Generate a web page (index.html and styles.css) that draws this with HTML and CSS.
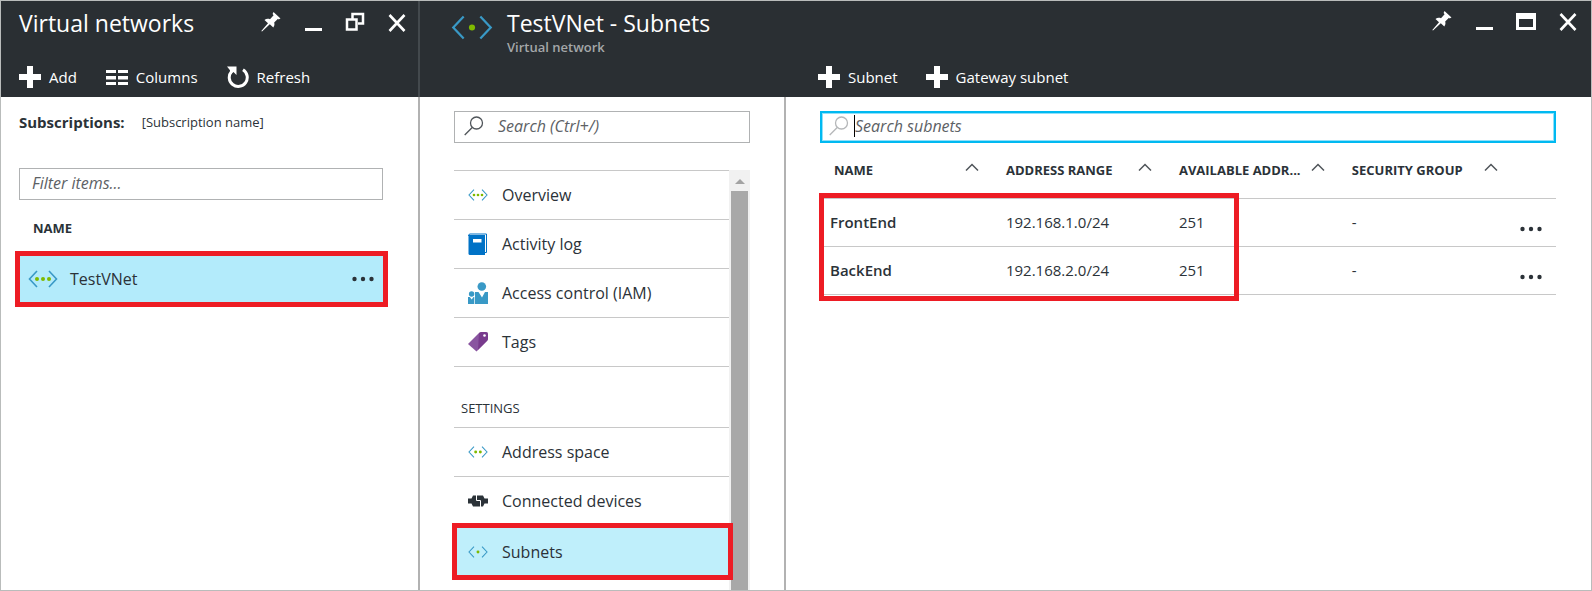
FILE: index.html
```html
<!DOCTYPE html>
<html lang="en">
<head>
<meta charset="utf-8">
<title>TestVNet - Subnets</title>
<link rel="stylesheet" href="styles.css">
</head>
<body>
<svg class="defs" aria-hidden="true">
  <symbol id="i-pin" viewBox="0 0 20 20"><path fill="currentColor" d="M12.500 0 19.500 6.500 17.500 7.500 17 6.800 13.200 10.600C13.800 12.500 13.300 14.200 12.300 15.500L8.800 12.200 1 19.500 0.300 19 7 11.200 3.500 8C5 6.700 7 6.500 9 7.200L12.600 3.200 11.600 2Z"/></symbol>
  <symbol id="i-min" viewBox="0 0 20 20"><path fill="currentColor" d="M2 16h17v3H2z"/></symbol>
  <symbol id="i-restore" viewBox="0 0 20 20"><path fill="none" stroke="currentColor" stroke-width="2.500" d="M7.500 7V2h10.500v9.500H13M2 7.500h9.500v10H2z"/></symbol>
  <symbol id="i-max" viewBox="0 0 20 20"><path fill="currentColor" fill-rule="evenodd" d="M0 2h20v17H0zM3 8v8h14V8z"/></symbol>
  <symbol id="i-close" viewBox="0 0 20 20"><path fill="none" stroke="currentColor" stroke-width="2.600" d="M2.500 3l15 16M17.500 3l-15 16"/></symbol>
  <symbol id="i-plus" viewBox="0 0 22 22"><path fill="currentColor" d="M8 0h6v8h8v6h-8v8H8v-8H0V8h8z"/></symbol>
  <symbol id="i-cols" viewBox="0 0 22 22"><path fill="currentColor" d="M0 4h10v3H0zM12 4h10v3H12zM0 10h10v3.500H0zM12 10h10v3.500H12zM0 16h10v3H0zM12 16h10v3H12z"/></symbol>
  <symbol id="i-refresh" viewBox="0 0 22 22"><path fill="none" stroke="currentColor" stroke-width="3" d="M16 3.800A9 9 0 1 1 4.500 5.500"/><path fill="currentColor" d="M0 0.500h9.500V9L6.500 6 4 8 2.800 4z"/></symbol>
  <symbol id="i-net3" viewBox="0 0 30 18"><path fill="none" stroke="#3999c6" stroke-width="1.600" d="M9 1 1.500 9 9 17M21 1l7.500 8L21 17"/><g fill="#7fba00"><circle cx="9" cy="9" r="2"/><circle cx="15" cy="9" r="2"/><circle cx="21" cy="9" r="2"/></g></symbol>
  <symbol id="i-net2" viewBox="0 0 30 18"><path fill="none" stroke="#3999c6" stroke-width="1.600" d="M9 1 1.500 9 9 17M21 1l7.500 8L21 17"/><g fill="#7fba00"><circle cx="11.500" cy="9" r="2.200"/><circle cx="18.500" cy="9" r="2.200"/></g></symbol>
  <symbol id="i-net1" viewBox="0 0 30 18"><path fill="none" stroke="#3999c6" stroke-width="1.600" d="M9 1 1.500 9 9 17M21 1l7.500 8L21 17"/><circle fill="#7fba00" cx="15" cy="9" r="2.200"/></symbol>
  <symbol id="i-search" viewBox="0 0 20 20"><g fill="none" stroke="currentColor" stroke-width="1.300"><circle cx="12.500" cy="7" r="6"/><path d="M8.200 11.500.7 19"/></g></symbol>
  <symbol id="i-book" viewBox="0 0 20 22"><path fill="#0072c6" d="M1 2h16v20H2a1.500 1.500 0 0 1-1.500-1.500V2z"/><path fill="none" stroke="#0072c6" d="M17 19.500h1.500V1H2Q.5 1 .5 3"/><path fill="#fff" d="M5 6h8.500v3.500H5z"/></symbol>
  <symbol id="i-iam" viewBox="0 0 20 22"><g fill="#3999c6"><circle cx="13.800" cy="4.500" r="4.300"/><circle cx="3.600" cy="12" r="2.700"/><path d="M7 10h3.500l3.500 5.500L17 10h3v12H7zM0 15h1.800l1.900 2.500L5.500 15H6.300v7H0z"/></g></symbol>
  <symbol id="i-tag" viewBox="0 0 20 20"><path fill="#8955a0" d="M11 1Q12 0 13.500 0H18q2 0 2 2v5q0 1-1 2L8.500 19.500 0 12z"/><path fill="#68217a" opacity=".5" d="M11 1Q12 0 13.500 0H18q2 0 2 2v5q0 1-1 2L10 18z"/><circle fill="#fff" cx="16.500" cy="3.500" r="1.300"/></symbol>
  <symbol id="i-plug" viewBox="0 0 20 12"><path fill="#2b3238" d="M0 3.500h3.500L5 .5h10l1.500 3H20v5h-3.500l-1.500 3H5l-1.500-3H0z"/><path fill="none" stroke="#fff" stroke-width="1" d="M8.500 0v5.500h4V12"/></symbol>
  <symbol id="i-chev" viewBox="0 0 14 8"><path fill="none" stroke="#50555a" stroke-width="1.500" d="M1 7.500 7 1.500l6 6"/></symbol>
  <symbol id="i-dots" viewBox="0 0 22 6"><g fill="currentColor"><circle cx="2.500" cy="3" r="2.200"/><circle cx="11" cy="3" r="2.200"/><circle cx="19.500" cy="3" r="2.200"/></g></symbol>
</svg>
<div class="portal">
  <section class="blade blade-list">
    <header class="head">
      <div class="titlebar">
        <h1 class="title">Virtual networks</h1>
        <div class="window-tools">
          <button aria-label="Pin"><svg><use href="#i-pin"/></svg></button>
          <button aria-label="Minimize"><svg><use href="#i-min"/></svg></button>
          <button aria-label="Restore"><svg><use href="#i-restore"/></svg></button>
          <button aria-label="Close"><svg><use href="#i-close"/></svg></button>
        </div>
      </div>
      <div class="commands">
        <button><svg><use href="#i-plus"/></svg>Add</button>
        <button><svg><use href="#i-cols"/></svg>Columns</button>
        <button><svg><use href="#i-refresh"/></svg>Refresh</button>
      </div>
    </header>
    <div class="list-body">
      <p class="subs"><b>Subscriptions:</b> <span>[Subscription name]</span></p>
      <input class="filter" type="text" placeholder="Filter items..." aria-label="Filter items">
      <h2 class="list-label">NAME</h2>
      <div class="vnet marked">
        <a href="#"><svg><use href="#i-net3"/></svg>TestVNet</a>
        <button class="more" aria-label="More"><svg><use href="#i-dots"/></svg></button>
      </div>
    </div>
  </section>

  <section class="detail">
    <header class="head detail-head">
      <div class="detail-title">
        <svg><use href="#i-net1"/></svg>
        <div>
          <h1 class="title">TestVNet - Subnets</h1>
          <p class="kind">Virtual network</p>
        </div>
      </div>
      <div class="detail-tools">
        <div class="window-tools">
          <button aria-label="Pin"><svg><use href="#i-pin"/></svg></button>
          <button aria-label="Minimize"><svg><use href="#i-min"/></svg></button>
          <button aria-label="Maximize"><svg><use href="#i-max"/></svg></button>
          <button aria-label="Close"><svg><use href="#i-close"/></svg></button>
        </div>
        <div class="commands">
          <button><svg><use href="#i-plus"/></svg>Subnet</button>
          <button><svg><use href="#i-plus"/></svg>Gateway subnet</button>
        </div>
      </div>
    </header>
    <div class="detail-body">
      <div class="menu-pane">
        <label class="search"><svg><use href="#i-search"/></svg><input type="text" placeholder="Search (Ctrl+/)" aria-label="Search"></label>
        <div class="menu-scroll">
          <nav class="menu">
            <a href="#"><svg><use href="#i-net3"/></svg>Overview</a>
            <a href="#"><svg><use href="#i-book"/></svg>Activity log</a>
            <a href="#"><svg><use href="#i-iam"/></svg>Access control (IAM)</a>
            <a href="#"><svg><use href="#i-tag"/></svg>Tags</a>
            <h2>SETTINGS</h2>
            <a href="#"><svg><use href="#i-net2"/></svg>Address space</a>
            <a href="#"><svg><use href="#i-plug"/></svg>Connected devices</a>
            <a href="#" class="marked current" aria-current="page"><svg><use href="#i-net1"/></svg>Subnets</a>
          </nav>
          <div class="scrollbar"><span class="arrow"></span><span class="thumb"></span></div>
        </div>
      </div>
      <div class="grid-pane">
        <label class="search focused"><svg><use href="#i-search"/></svg><span class="caret"></span><input type="text" placeholder="Search subnets" aria-label="Search subnets"></label>
        <div class="grid-wrap">
          <table class="grid">
            <thead>
              <tr>
                <th class="name"><div><span>NAME</span><svg><use href="#i-chev"/></svg></div></th>
                <th><div><span>ADDRESS RANGE</span><svg><use href="#i-chev"/></svg></div></th>
                <th><div><span>AVAILABLE ADDR...</span><svg><use href="#i-chev"/></svg></div></th>
                <th><div><span>SECURITY GROUP</span><svg><use href="#i-chev"/></svg></div></th>
                <th class="last"></th>
              </tr>
            </thead>
            <tbody>
              <tr><td class="name">FrontEnd</td><td>192.168.1.0/24</td><td>251</td><td>-</td><td class="last"><button class="more" aria-label="More"><svg><use href="#i-dots"/></svg></button></td></tr>
              <tr><td class="name">BackEnd</td><td>192.168.2.0/24</td><td>251</td><td>-</td><td class="last"><button class="more" aria-label="More"><svg><use href="#i-dots"/></svg></button></td></tr>
            </tbody>
          </table>
          <div class="highlight"></div>
        </div>
      </div>
    </div>
  </section>
</div>
</body>
</html>
```
FILE: styles.css
```css
* { box-sizing: border-box; }
body { margin: 0; font: 15px/20px "Open Sans", "Noto Sans", sans-serif; color: #2b3238; background: #fff; }
h1, h2, p { margin: 0; font-weight: 400; }
a { color: inherit; text-decoration: none; }
button { display: flex; align-items: center; padding: 0; border: 0; background: none; color: inherit; font: inherit; }
input { min-width: 0; border: 0; outline: 0; background: none; color: inherit; font: inherit; font-size: 16px; }
input::placeholder { color: #5d6165; font-style: italic; opacity: 1; }
svg { flex: none; display: block; }
.defs { position: absolute; width: 0; height: 0; }

.portal { display: flex; min-height: 100vh; border: 1px solid #b9bcbb; }
.blade-list { flex: 0 0 419px; border-right: 2px solid #b2b2b2; }
.detail { flex: 1; min-width: 0; display: flex; flex-direction: column; }

.head { height: 96px; background: #2a2f33; color: #fff; }
.blade-list .head { margin-right: -2px; border-right: 2px solid #43494d; padding: 7px 11px 0 18px; }
.titlebar { display: flex; justify-content: space-between; align-items: flex-start; }
.title { font-size: 23px; line-height: 30px; font-weight: 400; }
.window-tools { display: flex; gap: 22px; padding-top: 4px; }
.window-tools svg { width: 20px; height: 20px; }
.commands { display: flex; gap: 28px; }
.commands button { gap: 8px; height: 22px; }
.commands svg { width: 22px; height: 22px; }
.titlebar + .commands { gap: 29px; margin-top: 28px; }

.list-body { padding: 14px 14px 0; }
.subs { display: flex; gap: 17px; align-items: center; height: 22px; padding-left: 4px; }
.subs b { font-weight: 700; }
.subs span { font-size: 13px; }
.filter { display: block; width: calc(100% - 25px); height: 32px; margin: 35px 0 0 4px; padding: 0 12px 3px; border: 1px solid #b0b2b3; }
.list-label { margin: 18px 0 13px 18px; font-size: 13px; font-weight: 700; }
.marked { border: 5px solid #ed1c24; }
.vnet { display: flex; align-items: center; justify-content: space-between; height: 56px; margin-right: 16px; padding: 0 9px 0 8px; background: #b3ebfb; font-size: 16px; }
.vnet a { display: flex; align-items: center; gap: 12px; }
.vnet a svg { width: 30px; height: 18px; }
.more svg { width: 22px; height: 6px; }

.detail-head { display: flex; }
.detail-title { flex: 0 0 366px; display: flex; gap: 14px; padding: 7px 0 0 31px; }
.detail-title svg { width: 42px; height: 25px; margin-top: 7px; }
.kind { font-size: 13px; line-height: 18px; font-weight: 600; color: #a4a7a9; }
.detail-tools { flex: 1; padding: 10px 13px 0 32px; }
.detail-tools .window-tools { justify-content: flex-end; padding: 0; }
.detail-tools .commands { margin-top: 35px; }

.detail-body { flex: 1; display: flex; }
.menu-pane { flex: 0 0 366px; display: flex; flex-direction: column; padding: 14px 34px 0; border-right: 2px solid #b2b2b2; }
.search { display: flex; align-items: center; height: 32px; padding: 0 9px 2px; border: 1px solid #b0b2b3; color: #50555a; }
.search svg { width: 20px; height: 20px; }
.search input { flex: 1; padding: 0 0 0 14px; }
.menu-scroll { flex: 1; display: flex; margin-top: 27px; }
.menu { flex: 1; }
.menu a { display: flex; align-items: center; gap: 14px; height: 49px; padding: 0 0 0 14px; border-top: 1px solid #c8c8c8; font-size: 16px; }
.menu a svg { width: 20px; height: 22px; }
.menu h2 { padding: 31px 0 9px 7px; border-top: 1px solid #c8c8c8; font-size: 13px; }
.menu a.current { height: 57px; margin: -2px -4px 0 -2px; padding: 0 0 0 11px; border: 5px solid #ed1c24; background: #bfeffb; position: relative; }
.scrollbar { flex: 0 0 21px; display: flex; flex-direction: column; align-items: center; background: #f1f1f1; }
.arrow { margin: 9px 0 7px; border: 5px solid transparent; border-top: 0; border-bottom-color: #a3a3a3; }
.thumb { flex: 1; width: 17px; background: #a8a8a8; }

.grid-pane { flex: 1; min-width: 0; padding: 14px 35px 0 34px; }
.search.focused { padding: 0 7px 2px; border: 2px solid #00b9f1; box-shadow: inset 0 0 0 1px #8fe0f9; color: #b5b7b9; }
.caret { width: 1px; height: 22px; margin-left: 5px; background: #000; }
.focused input { padding: 0; color: #2b3238; }
.grid-wrap { position: relative; }
.grid { width: 100%; table-layout: fixed; border-collapse: collapse; }
.grid th { height: 55px; padding: 0 0 0 13px; text-align: left; font-size: 13px; font-weight: 700; }
.grid th.name { padding-left: 14px; }
.grid th:not(.last) { width: 23.5%; }
.grid th div { display: flex; justify-content: space-between; padding-right: 14px; }
.grid th span { white-space: nowrap; }
.grid th svg { width: 14px; height: 8px; margin-top: 3px; }
.grid td { height: 48px; padding: 0 0 0 13px; border-top: 1px solid #c8c8c8; border-bottom: 1px solid #c8c8c8; }
.grid td.name { padding-left: 10px; font-weight: 600; }
.grid .last, .grid td.last { padding: 13px 0 0 8px; }
.highlight { position: absolute; left: -1px; top: 50px; bottom: -6px; width: 57%; border: 5px solid #ed1c24; pointer-events: none; }
```
